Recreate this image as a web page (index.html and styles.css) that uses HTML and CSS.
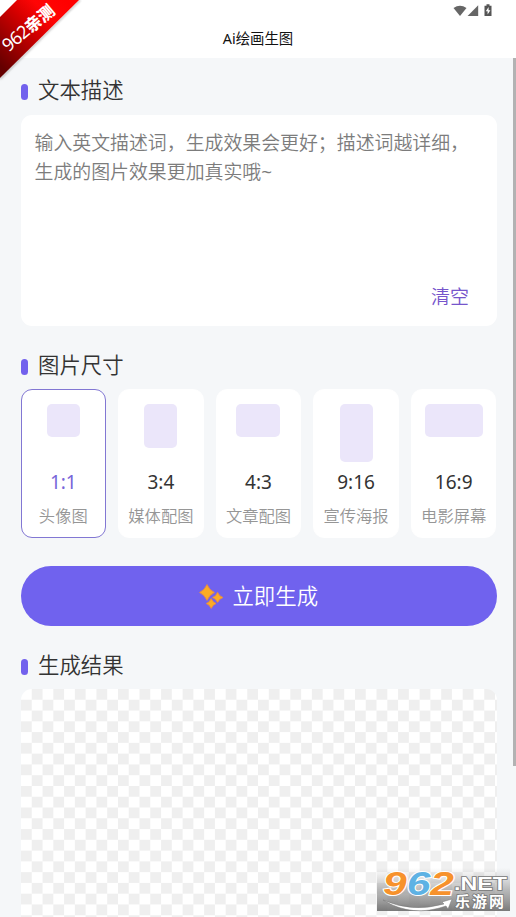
FILE: index.html
```html
<!DOCTYPE html>
<html lang="zh-CN">
<head>
<meta charset="utf-8">
<title>Ai绘画生图</title>
<link rel="stylesheet" href="styles.css">
</head>
<body>
<div class="screen">
  <header class="header">
    <div class="status">
      <svg class="status-icons" width="42" height="14" viewBox="0 0 42 14">
        <path fill="#666" d="M0.5 4 Q7 -0.3 13.5 4 L7 12Z"/>
        <path fill="#666" d="M25.2 1.2V12H14.6Z"/>
        <path fill="#555" d="M33.5 0.3h3v1.4h2v10.3h-7V1.7h2Z"/>
        <path fill="#fff" d="M35.6 3 L32.8 7.3H34.6V10.5L37.4 6.2H35.6Z"/>
      </svg>
    </div>
    <h1 class="title">Ai绘画生图</h1>
  </header>
  <main class="content">
    <h2 class="heading">文本描述</h2>
    <section class="prompt">
      <p class="placeholder">输入英文描述词，生成效果会更好；描述词越详细，<br>生成的图片效果更加真实哦~</p>
      <span class="clear">清空</span>
    </section>
    <h2 class="heading heading-size">图片尺寸</h2>
    <section class="sizes">
      <div class="card active"><div class="frame"><i class="shape square"></i></div><b class="ratio">1:1</b><span class="label">头像图</span></div>
      <div class="card"><div class="frame"><i class="shape portrait"></i></div><b class="ratio">3:4</b><span class="label">媒体配图</span></div>
      <div class="card"><div class="frame"><i class="shape landscape"></i></div><b class="ratio">4:3</b><span class="label">文章配图</span></div>
      <div class="card"><div class="frame"><i class="shape tall"></i></div><b class="ratio">9:16</b><span class="label">宣传海报</span></div>
      <div class="card"><div class="frame"><i class="shape wide"></i></div><b class="ratio">16:9</b><span class="label">电影屏幕</span></div>
    </section>
    <button class="generate">
      <svg width="25" height="25" viewBox="0 0 25 25" fill="#fbac25" stroke="#e58b49" stroke-width="1" stroke-linejoin="round">
        <path d="M8 .6Q10.4 6.2 15.4 8.5Q10.4 10.8 8 16.4Q5.6 10.8 .6 8.5Q5.6 6.2 8 .6Z"/>
        <path d="M18.6 8.4Q20.2 12.2 23.9 13.5Q20.2 14.8 18.6 18.4Q17 14.8 13.5 13.5Q17 12.2 18.6 8.4Z"/>
        <path d="M12.2 14.6Q13.7 18.2 17.1 19.5Q13.7 20.8 12.2 24.4Q10.7 20.8 7.3 19.5Q10.7 18.2 12.2 14.6Z"/>
      </svg>
      <span>立即生成</span>
    </button>
    <h2 class="heading heading-result">生成结果</h2>
    <section class="result"></section>
  </main>
  <div class="scrollbar"></div>
  <svg class="ribbon" width="82" height="82" viewBox="0 0 82 82">
    <defs>
      <linearGradient id="red" gradientUnits="userSpaceOnUse" x1="0" y1="65" x2="65" y2="0">
        <stop offset="0" stop-color="#650000"/><stop offset=".55" stop-color="#d90000"/><stop offset=".75" stop-color="#ff0505"/><stop offset="1" stop-color="#ff0000"/>
      </linearGradient>
      <filter id="soft"><feGaussianBlur stdDeviation="1"/></filter>
    </defs>
    <path d="M0 79L80 0" stroke="#777" stroke-opacity=".6" stroke-width="1.5" filter="url(#soft)"/>
    <path d="M17 0H79L0 78V17Z" fill="url(#red)"/>
    <text class="ribbon-text" transform="translate(8.5 52.5) rotate(-40)"><tspan class="ribbon-num">962</tspan><tspan class="ribbon-word">亲测</tspan></text>
  </svg>
  <svg class="watermark" width="135" height="49" viewBox="0 0 135 49">
    <defs><linearGradient id="grey" x1="0" y1="0" x2="0" y2="1"><stop offset="0" stop-color="#aaa" stop-opacity="0"/><stop offset=".5" stop-color="#999" stop-opacity=".65"/><stop offset="1" stop-color="#737373" stop-opacity=".95"/></linearGradient></defs>
    <path d="M1 2H134V45H1Z" fill="url(#grey)"/>
    <text class="wm-num" x="7" y="29" textLength="71" lengthAdjust="spacingAndGlyphs"><tspan fill="#f7922c">9</tspan><tspan fill="#5eb2e4">6</tspan><tspan fill="#f7922c">2</tspan></text>
    <text class="wm-net" x="78" y="23.5" textLength="53" lengthAdjust="spacingAndGlyphs">.NET</text>
    <path d="M7 34Q36 47 68 38L66 36L76 33L72 43L70 40Q36 52 7 34Z" fill="#fff" stroke="#777" stroke-width=".5"/>
    <text class="wm-cn" x="79" y="41" textLength="49">乐游网</text>
  </svg>
</div>
</body>
</html>
```
FILE: styles.css
```css
* { box-sizing: border-box; }
body {
  margin: 0;
  font-family: "Noto Sans", "Noto Sans CJK SC DemiLight", "Noto Sans CJK SC", sans-serif;
}
.screen {
  position: relative;
  width: 516px;
  height: 917px;
  overflow: hidden;
  background: #f5f7f9;
}
.header { height: 58px; background: #fff; }
.status { display: flex; justify-content: flex-end; height: 20px; padding: 4px 21px 0 0; }
.title {
  margin: 9px 0 0;
  font-family: "Noto Sans", "Noto Sans CJK SC", sans-serif;
  font-size: 14.4px;
  font-weight: 400;
  line-height: 20px;
  text-align: center;
  color: #111;
}
.content { padding: 17px 19.5px 0 20.5px; }
.heading {
  display: flex;
  align-items: center;
  gap: 10.5px;
  height: 30px;
  margin: 0;
  font-size: 21.4px;
  font-weight: 400;
  line-height: 30px;
  color: #333;
}
.heading::before {
  content: "";
  width: 7px;
  height: 16px;
  margin-top: 4px;
  border-radius: 3.5px;
  background: #7261ed;
}
.prompt {
  display: flex;
  flex-direction: column;
  justify-content: space-between;
  height: 211px;
  margin-top: 9.5px;
  padding: 14px 14px 15px;
  border-radius: 11px;
  background: #fff;
}
.placeholder { margin: 0; font-size: 18.9px; font-weight: 400; line-height: 29px; color: #7c7c7c; white-space: nowrap; }
.clear { align-self: flex-end; margin-right: 13.5px; font-size: 19px; font-weight: 400; line-height: 28px; color: #7655cb; }
.heading-size { margin-top: 24.5px; }
.sizes { display: grid; grid-template-columns: repeat(5, 1fr); gap: 12px; margin-top: 9px; }
.card {
  display: flex;
  flex-direction: column;
  align-items: center;
  height: 149px;
  padding-top: 14px;
  border: 1px solid #fff;
  border-radius: 11px;
  background: #fff;
}
.active { border-color: #8277d3; }
.frame { height: 64px; }
.shape { display: block; border-radius: 5px; background: #ebe6fa; }
.square { width: 33px; height: 33px; }
.portrait { width: 33px; height: 44px; }
.landscape { width: 44px; height: 33px; }
.tall { width: 33px; height: 58px; }
.wide { width: 58px; height: 33px; }
.ratio { font-size: 19px; font-weight: 400; line-height: 28px; color: #333; }
.active .ratio { color: #7865d9; }
.label { margin-top: 8px; font-size: 16.3px; font-weight: 400; line-height: 24px; color: #969696; white-space: nowrap; }
.generate {
  display: flex;
  align-items: center;
  justify-content: center;
  gap: 8.5px;
  width: 100%;
  height: 60px;
  margin-top: 28px;
  padding: 0;
  border: 0;
  border-radius: 30px;
  background: #7062ee;
  font: 400 21.4px/30px "Noto Sans", "Noto Sans CJK SC DemiLight", "Noto Sans CJK SC", sans-serif;
  color: #fff;
}
.heading-result { margin-top: 24px; }
.result {
  height: 240px;
  margin-top: 8.5px;
  border-radius: 11px 11px 0 0;
  background: repeating-conic-gradient(#efefef 0 25%, #fff 0 50%) 0 0 / 21.56px 21.56px;
}
.scrollbar {
  position: absolute;
  top: 58px;
  right: 0;
  width: 3px;
  height: 708px;
  background: #b2b2b3;
}
.ribbon { position: absolute; top: 0; left: 0; }
.ribbon-text { fill: #fff; }
.ribbon-num { font: 18px "Noto Sans", sans-serif; letter-spacing: -.6px; }
.ribbon-word { font: 900 16.5px "Noto Sans CJK SC", sans-serif; }
.watermark { position: absolute; left: 376px; top: 866px; }
.wm-num { font: italic 700 34px "Liberation Sans", sans-serif; stroke: #fff; stroke-width: 2px; paint-order: stroke; }
.wm-net { font: 700 18px "Liberation Sans", sans-serif; fill: #fff; stroke: #777; stroke-width: 1.5px; paint-order: stroke; }
.wm-cn { font: 700 15px "Noto Sans CJK SC", sans-serif; fill: #fff; stroke: #777; stroke-width: 1.5px; paint-order: stroke; }
```
